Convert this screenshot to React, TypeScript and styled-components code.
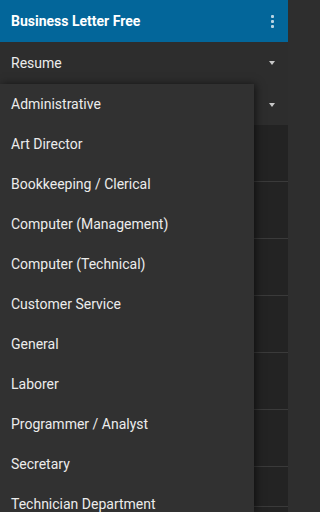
import React from 'react';
import styled, { createGlobalStyle } from 'styled-components';

const GlobalStyle = createGlobalStyle`
  html, body {
    margin: 0;
    padding: 0;
    background-color: #2e2e2e;
  }
  * {
    box-sizing: border-box;
  }
`;

const Screen = styled.div`
  position: relative;
  width: 288px;
  height: 512px;
  overflow: hidden;
  display: flex;
  flex-direction: column;
  background-color: #2e2e2e;
  font-family: Roboto, "Liberation Sans", sans-serif;
  color: #ececec;
`;

const AppBar = styled.div`
  flex: 0 0 42px;
  display: flex;
  align-items: center;
  justify-content: space-between;
  padding: 0 11px;
  background-color: #03669a;
`;

const Title = styled.span`
  font-size: 14px;
  font-weight: 700;
  color: #ffffff;
`;

const Kebab = styled.div`
  display: flex;
  flex-direction: column;
  gap: 2px;
  margin-right: 3px;
  span {
    width: 3px;
    height: 3px;
    border-radius: 1px;
    background-color: #b9d3e2;
  }
`;

const SpinnerRow = styled.div<{ $height: number }>`
  flex: 0 0 ${(p) => p.$height}px;
  display: flex;
  align-items: center;
  justify-content: space-between;
  padding: 0 13px 0 11px;
  font-size: 14px;
  background-color: #2d2d2d;
`;

const Arrow = styled.span`
  width: 0;
  height: 0;
  border-left: 3.5px solid transparent;
  border-right: 3.5px solid transparent;
  border-top: 4px solid #c8c8c8;
`;

const List = styled.div`
  flex: 1;
  display: flex;
  flex-direction: column;
  background-color: #232323;
`;

const ListRow = styled.div<{ $height: number }>`
  flex: 0 0 ${(p) => p.$height}px;
  border-bottom: 1px solid #3a3a3a;
`;

const Popup = styled.div`
  position: absolute;
  top: 84px;
  left: 0;
  bottom: 0;
  width: 254px;
  background-color: #313131;
  box-shadow: 2px 0 8px rgba(0, 0, 0, 0.55);
  display: flex;
  flex-direction: column;
`;

const Option = styled.div`
  flex: 0 0 40px;
  display: flex;
  align-items: center;
  padding: 0 0 1px 11px;
  font-size: 14px;
  color: #ececec;
  white-space: nowrap;
`;

const options = [
  'Administrative',
  'Art Director',
  'Bookkeeping / Clerical',
  'Computer (Management)',
  'Computer (Technical)',
  'Customer Service',
  'General',
  'Laborer',
  'Programmer / Analyst',
  'Secretary',
  'Technician Department',
];

const rowHeights = [57, 57, 57, 57, 57, 57, 40];

const App = () => {
  return (
    <>
      <GlobalStyle />
      <Screen>
        <AppBar>
          <Title>Business Letter Free</Title>
          <Kebab>
            <span />
            <span />
            <span />
          </Kebab>
        </AppBar>
        <SpinnerRow $height={42}>
          <span>Resume</span>
          <Arrow />
        </SpinnerRow>
        <SpinnerRow $height={41}>
          <span>Administrative</span>
          <Arrow />
        </SpinnerRow>
        <List>
          {rowHeights.map((h, i) => (
            <ListRow key={i} $height={h} />
          ))}
        </List>
        <Popup>
          {options.map((name) => (
            <Option key={name}>{name}</Option>
          ))}
        </Popup>
      </Screen>
    </>
  );
};

export default App;
